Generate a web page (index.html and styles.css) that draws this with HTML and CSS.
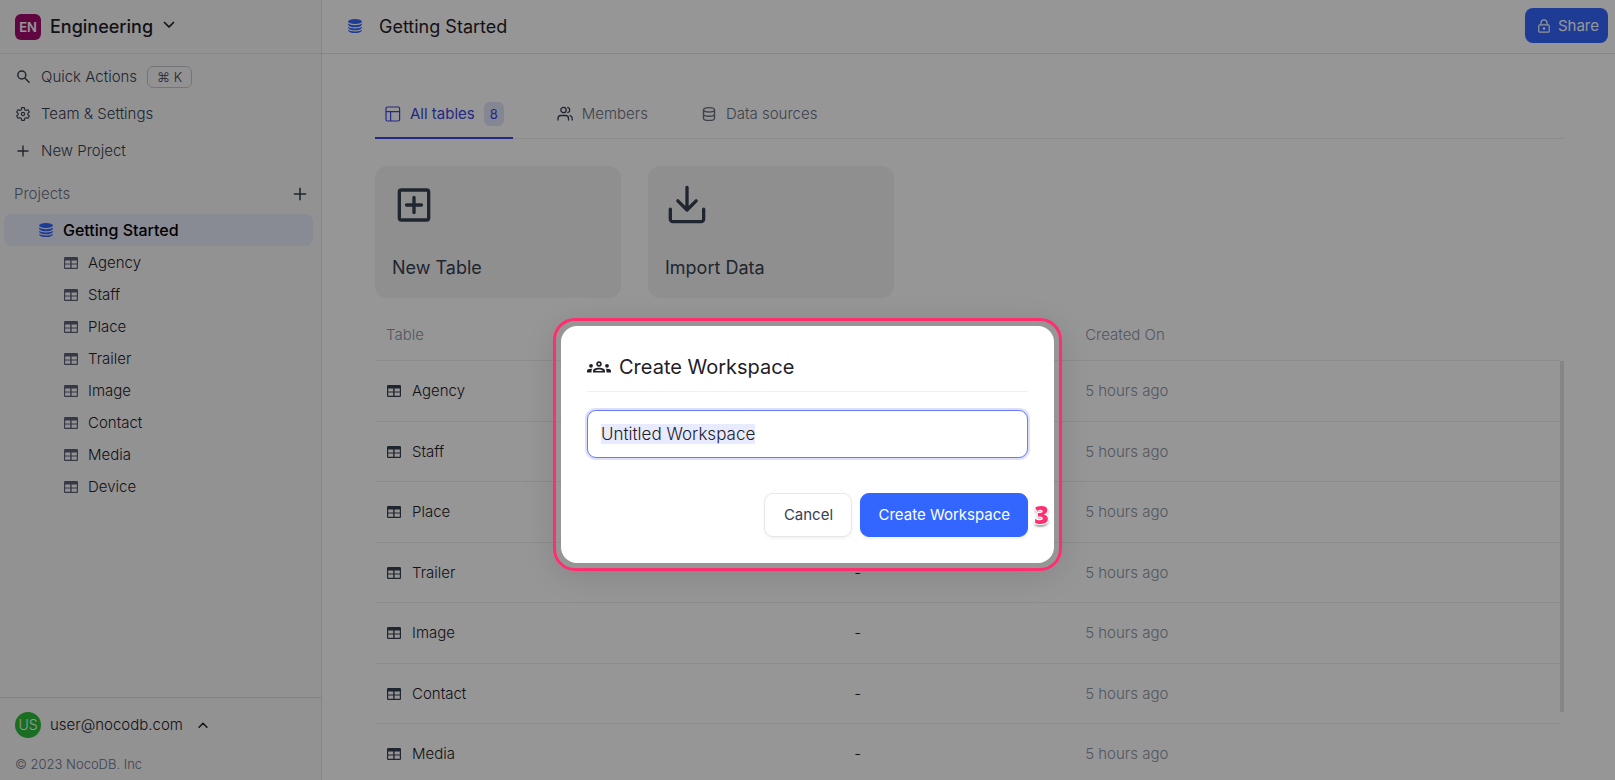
FILE: index.html
```html
<!DOCTYPE html>
<html lang="en">
<head>
<meta charset="utf-8">
<title>Getting Started</title>
<link rel="stylesheet" href="styles.css">
</head>
<body>
<svg class="sprite" aria-hidden="true">
  <symbol id="i-table" viewBox="0 0 14 12"><path fill="currentColor" fill-rule="evenodd" d="M1.200 0h11.600a1.200 1.200 0 0 1 1.200 1.200v9.600a1.200 1.200 0 0 1-1.200 1.200H1.200A1.200 1.200 0 0 1 0 10.800V1.200A1.200 1.200 0 0 1 1.200 0ZM1.200 3.400v3h5v-3Zm6.400 0v3h5.200v-3ZM1.200 7.600v3.200h5V7.600Zm6.400 0v3.200h5.200V7.600Z"/></symbol>
  <symbol id="i-db" viewBox="0 0 14 14"><g fill="currentColor"><ellipse cx="7" cy="2.500" rx="6.800" ry="2.500"/><path d="M.2 4.300C1.200 5.700 3.800 6.200 7 6.200s5.800-.5 6.800-1.900v1.600C13 7.300 10.500 8.300 7 8.300S1 7.300.2 5.900Z"/><path d="M.2 7.800C1.200 9 3.800 9.400 7 9.400s5.800-.4 6.800-1.600v1.200c-.8 1.400-3.300 2.300-6.800 2.300S1 10.400.2 9Z"/><path d="M.2 10.700c1 1.300 3.600 1.700 6.800 1.700s5.800-.4 6.800-1.700v1C13 13.100 10.500 14 7 14S1 13.100.2 11.700Z"/></g></symbol>
  <symbol id="i-plus" viewBox="0 0 16 16"><path d="M8 3v10M3 8h10" fill="none" stroke="currentColor" stroke-width="1.400" stroke-linecap="round"/></symbol>
  <symbol id="i-chev" viewBox="0 0 16 16"><path d="m3.500 5.500 4.500 4.500 4.500-4.500" fill="none" stroke="currentColor" stroke-width="1.700" stroke-linecap="round" stroke-linejoin="round"/></symbol>
</svg>

<div class="app">
  <aside class="sidebar">
    <header class="workspace">
      <span class="ws-badge">EN</span>
      <span class="ws-name">Engineering</span>
      <svg class="ic16 ws-chev"><use href="#i-chev"/></svg>
    </header>
    <nav class="actions">
      <a href="#" class="action">
        <svg class="ic16" viewBox="0 0 16 16" fill="none" stroke="currentColor" stroke-width="1.500"><circle cx="6.800" cy="6" r="4"/><path d="m9.800 9 4.700 4.700"/></svg>
        Quick Actions <kbd class="kbd">⌘ K</kbd>
      </a>
      <a href="#" class="action">
        <svg class="ic16" viewBox="0 0 24 24" fill="none" stroke="currentColor" stroke-width="1.700" stroke-linejoin="round"><circle cx="12" cy="12" r="2.400"/><path d="M10 2.500h4l.6 3 2 1.100 2.900-1 2 3.500-2.300 2v1.900l2.300 2-2 3.500-2.900-1-2 1.100-.6 3h-4l-.6-3-2-1.100-2.900 1-2-3.500 2.300-2v-1.900l-2.300-2 2-3.500 2.900 1 2-1.100z"/></svg>
        Team &amp; Settings
      </a>
      <a href="#" class="action"><svg class="ic16"><use href="#i-plus"/></svg>New Project</a>
    </nav>
    <div class="projects-head">
      <span>Projects</span>
      <button class="icon-btn" aria-label="Add project"><svg class="ic18"><use href="#i-plus"/></svg></button>
    </div>
    <a href="#" class="project"><svg class="db"><use href="#i-db"/></svg>Getting Started</a>
    <nav class="tree">
      <a href="#"><svg class="tbl"><use href="#i-table"/></svg>Agency</a>
      <a href="#"><svg class="tbl"><use href="#i-table"/></svg>Staff</a>
      <a href="#"><svg class="tbl"><use href="#i-table"/></svg>Place</a>
      <a href="#"><svg class="tbl"><use href="#i-table"/></svg>Trailer</a>
      <a href="#"><svg class="tbl"><use href="#i-table"/></svg>Image</a>
      <a href="#"><svg class="tbl"><use href="#i-table"/></svg>Contact</a>
      <a href="#"><svg class="tbl"><use href="#i-table"/></svg>Media</a>
      <a href="#"><svg class="tbl"><use href="#i-table"/></svg>Device</a>
    </nav>
    <footer class="account">
      <div class="user">
        <span class="avatar">US</span>
        <span>user@nocodb.com</span>
        <svg class="ic14 up"><use href="#i-chev"/></svg>
      </div>
      <div class="copy">© 2023 NocoDB. Inc</div>
    </footer>
  </aside>

  <main class="main">
    <header class="topbar">
      <svg class="db"><use href="#i-db"/></svg>
      <h1 class="title">Getting Started</h1>
      <button class="share">
        <svg class="ic14" viewBox="0 0 14 14" fill="none" stroke="currentColor" stroke-width="1.200" stroke-linejoin="round"><rect x="1.800" y="5.800" width="10.400" height="7.400" rx="1"/><path d="M4 5.800V3.800a3 3 0 0 1 6 0v2"/><circle cx="7" cy="9.500" r=".7"/></svg>
        Share
      </button>
    </header>
    <section class="content">
      <nav class="tabs">
        <a href="#" class="tab active">
          <svg class="ic16" viewBox="0 0 16 16" fill="none" stroke="currentColor" stroke-width="1.200"><rect x="1" y="1" width="13.600" height="14" rx="1.500"/><path d="M1 5.600h13.600M5.600 5.600V15"/></svg>
          All tables <span class="count">8</span>
        </a>
        <a href="#" class="tab">
          <svg class="ic16 dark" viewBox="0 0 16 16" fill="none" stroke="currentColor" stroke-width="1.300" stroke-linecap="round"><circle cx="6.500" cy="4" r="2.700"/><path d="M1 14v-1.500a3 3 0 0 1 3-3h4.500a3 3 0 0 1 3 3V14M10.800 1.400a2.700 2.700 0 0 1 0 5.200M13 9.700a3 3 0 0 1 2.200 2.900V14"/></svg>
          Members
        </a>
        <a href="#" class="tab">
          <svg class="ic16" viewBox="0 0 16 16" fill="none" stroke="currentColor" stroke-width="1.400"><ellipse cx="8" cy="3.800" rx="5.500" ry="2.200"/><path d="M2.500 3.800v8.400c0 1.200 2.500 2.200 5.500 2.200s5.500-1 5.500-2.200V3.800M2.500 8c0 1.200 2.500 2.200 5.500 2.200s5.500-1 5.500-2.200"/></svg>
          Data sources
        </a>
      </nav>
      <div class="cards">
        <button class="card">
          <svg class="ic40" viewBox="0 0 24 24" fill="none" stroke="currentColor" stroke-width="2" stroke-linecap="round" stroke-linejoin="round"><rect x="3.200" y="3" width="17.600" height="18" rx="1.200"/><path d="M12 7.500v9M7.500 12h9"/></svg>
          New Table
        </button>
        <button class="card">
          <svg class="ic40" viewBox="0 0 24 24" fill="none" stroke="currentColor" stroke-width="2" stroke-linecap="round" stroke-linejoin="round"><path d="M2 14.500v6A1.500 1.500 0 0 0 3.500 22h17a1.500 1.500 0 0 0 1.500-1.500v-6M6.500 9.500l5.500 5.500 5.500-5.500M12 1.500V15"/></svg>
          Import Data
        </button>
      </div>
      <div class="list">
        <table class="grid">
          <thead><tr><th class="c1">Table</th><th class="c2">Source</th><th>Created On</th></tr></thead>
          <tbody>
            <tr><td><span class="cell"><svg class="tbl"><use href="#i-table"/></svg>Agency</span></td><td class="src">-</td><td class="ago">5 hours ago</td></tr>
            <tr><td><span class="cell"><svg class="tbl"><use href="#i-table"/></svg>Staff</span></td><td class="src">-</td><td class="ago">5 hours ago</td></tr>
            <tr><td><span class="cell"><svg class="tbl"><use href="#i-table"/></svg>Place</span></td><td class="src">-</td><td class="ago">5 hours ago</td></tr>
            <tr><td><span class="cell"><svg class="tbl"><use href="#i-table"/></svg>Trailer</span></td><td class="src">-</td><td class="ago">5 hours ago</td></tr>
            <tr><td><span class="cell"><svg class="tbl"><use href="#i-table"/></svg>Image</span></td><td class="src">-</td><td class="ago">5 hours ago</td></tr>
            <tr><td><span class="cell"><svg class="tbl"><use href="#i-table"/></svg>Contact</span></td><td class="src">-</td><td class="ago">5 hours ago</td></tr>
            <tr><td><span class="cell"><svg class="tbl"><use href="#i-table"/></svg>Media</span></td><td class="src">-</td><td class="ago">5 hours ago</td></tr>
          </tbody>
        </table>
        <div class="track"><div class="thumb"></div></div>
      </div>
    </section>
  </main>
</div>

<div class="overlay">
  <div class="focus-ring">
    <form class="dialog" role="dialog" aria-labelledby="dlg-title">
      <div class="dialog-head">
        <svg class="groups" viewBox="0 0 24 12" fill="currentColor"><path fill-rule="evenodd" d="M12 .3a2.700 2.700 0 1 1 0 5.400 2.700 2.700 0 0 1 0-5.400Zm0 1.600a1.100 1.100 0 1 0 0 2.200 1.100 1.100 0 0 0 0-2.200Z"/><path fill-rule="evenodd" d="M6 11.500V9.900c0-2 2.900-3.200 6-3.200s6 1.200 6 3.200v1.600Zm2-1.600h8c-.5-.9-2.300-1.500-4-1.500s-3.500.6-4 1.500Z"/><circle cx="4" cy="4.800" r="1.900"/><circle cx="20" cy="4.800" r="1.900"/><path d="M0 11.500v-1.800c0-1.500 2-2.200 5.300-2-.6.700-.8 1.400-.8 2.200v1.600ZM24 11.500v-1.800c0-1.500-2-2.200-5.300-2 .6.700.8 1.400.8 2.200v1.600Z"/></svg>
        <h2 class="dialog-title" id="dlg-title">Create Workspace</h2>
      </div>
      <input class="field" type="text" aria-label="Workspace name" value="Untitled Workspace" autofocus>
      <div class="buttons">
        <button type="button" class="btn">Cancel</button>
        <button type="button" class="btn primary">Create Workspace</button>
      </div>
      <span class="step">3</span>
    </form>
  </div>
</div>
<script src="main.js"></script>
</body>
</html>
```
FILE: styles.css
```css
* { box-sizing: border-box; }
html, body { height: 100%; }
body {
  margin: 0;
  overflow: hidden;
  font-family: Inter, "Open Sans", sans-serif;
  font-size: 15px;
  font-weight: 300;
  line-height: 20px;
  color: #1f2028;
}
a { color: inherit; text-decoration: none; }
button, input { font: inherit; color: inherit; }
h1, h2 { margin: 0; font-weight: 400; }
svg { flex: none; }
.sprite { position: absolute; width: 0; height: 0; }
.ic14 { width: 14px; height: 14px; }
.ic16 { width: 16px; height: 16px; }
.ic18 { width: 18px; height: 18px; }
.ic40 { width: 40px; height: 40px; }
.tbl { width: 14px; height: 12px; color: #374151; }
.db { width: 14px; height: 14px; color: #3366ff; }

.app { display: flex; height: 100%; }

.sidebar {
  display: flex;
  flex-direction: column;
  flex: none;
  width: 322px;
  background: #f9f9fa;
  border-right: 1px solid #e4e4e8;
}
.workspace {
  display: flex;
  align-items: center;
  height: 54px;
  padding: 0 15px;
  border-bottom: 1px solid #e4e4e8;
}
.ws-badge {
  width: 26px;
  margin-right: 9px;
  border-radius: 6px;
  background: #a30d70;
  color: #fff;
  font-size: 13px;
  font-weight: 600;
  line-height: 26px;
  text-align: center;
}
.ws-name { font-size: 18px; font-weight: 500; }
.ws-chev { margin: 0 0 4px 8px; }
.actions { padding-top: 4px; }
.action {
  display: flex;
  align-items: center;
  gap: 10px;
  height: 37px;
  padding-left: 15px;
  color: #374151;
}
.kbd {
  padding: 0 9px;
  border: 1px solid #c8c8ce;
  border-radius: 6px;
  font: inherit;
  font-size: 13px;
}
.projects-head {
  display: flex;
  align-items: center;
  justify-content: space-between;
  height: 45px;
  padding: 5px 12px 0 14px;
  color: #6a7184;
}
.icon-btn { display: flex; padding: 0; border: 0; background: none; color: #374151; }
.project {
  display: flex;
  align-items: center;
  gap: 10px;
  height: 32px;
  margin: 0 8px 0 4px;
  padding-left: 35px;
  border-radius: 8px;
  background: #e8ecfb;
  color: #000;
  font-size: 16px;
  font-weight: 500;
}
.tree { flex: 1; padding-top: 1px; }
.tree a {
  display: flex;
  align-items: center;
  gap: 10px;
  height: 32px;
  padding-left: 64px;
}
.tree .tbl { color: #5c6278; }
.account {
  height: 83px;
  padding: 14px 15px;
  border-top: 1px solid #e0e0e4;
}
.user { display: flex; align-items: center; gap: 9px; }
.user .up { margin-left: 4px; transform: rotate(180deg); }
.avatar {
  width: 26px;
  border-radius: 50%;
  background: #2cbb3a;
  color: #fff;
  font-size: 14px;
  line-height: 26px;
  text-align: center;
}
.copy { margin-top: 16px; color: #6a7184; font-size: 13px; }

.main { flex: 1; min-width: 0; display: flex; flex-direction: column; background: #fff; }
.topbar {
  display: flex;
  align-items: center;
  flex: none;
  height: 54px;
  padding: 0 7px 2px 26px;
  border-bottom: 1px solid #e4e4e8;
}
.title { flex: 1; margin-left: 17px; padding-top: 2px; font-size: 18px; }
.share {
  display: flex;
  align-items: center;
  gap: 7px;
  height: 35px;
  padding: 0 9px 0 12px;
  border: 0;
  border-radius: 8px;
  background: #3366ff;
  color: #fff;
  font-weight: 400;
}
.content {
  display: flex;
  flex-direction: column;
  flex: 1;
  min-height: 0;
  padding: 34px 51px 0 53px;
}
.tabs { display: flex; flex: none; gap: 34px; height: 51px; border-bottom: 1px solid #eeeef0; }
.tab {
  display: flex;
  align-items: center;
  gap: 9px;
  height: 51px;
  padding: 2px 9px 0 10px;
  border-bottom: 2px solid transparent;
  color: #6a7184;
}
.tab .dark { color: #374151; }
.tab.active { border-color: #3c46e0; color: #3c46e0; font-weight: 400; }
.count {
  padding: 2px 6px;
  border-radius: 6px;
  background: #e0e4fa;
  font-size: 13px;
}
.cards { display: flex; flex: none; gap: 27px; padding-top: 27px; }
.card {
  display: flex;
  flex-direction: column;
  justify-content: space-between;
  width: 246px;
  height: 132px;
  padding: 19px 17px 20px;
  border: 0;
  border-radius: 12px;
  background: #f3f3f4;
  color: #374151;
  font-size: 18px;
  font-weight: 400;
  text-align: left;
}
.card svg { margin-left: 2px; }
.list { display: flex; flex: 1; min-height: 0; padding-top: 12px; overflow: hidden; }
.grid { flex: 1; align-self: flex-start; border-collapse: separate; border-spacing: 0; table-layout: fixed; }
.grid th, .grid td { padding: 0 11px; border-bottom: 1px solid #eeeef0; text-align: left; }
.grid th { height: 51px; color: #8d94a5; font-weight: 300; }
.grid td { height: 60px; }
.grid tr:nth-child(odd) td { height: 61px; }
.c1 { width: 39%; }
.c2 { width: 20%; }
.grid td:first-child { padding-left: 12px; }
.grid td.src { padding-left: 17px; }
.grid td.ago { color: #8d94a5; }
.cell { display: flex; align-items: center; gap: 11px; }
.track { width: 4px; padding-top: 51px; }
.thumb { height: 351px; background: #e2e2e3; }

.overlay {
  position: fixed;
  inset: 0;
  display: grid;
  place-items: center;
  padding-top: 110px;
  align-items: start;
  background: rgba(0, 0, 0, 0.41);
}
.focus-ring {
  margin-top: 208px;
  padding: 5px;
  border: 3px solid #ff2e6e;
  border-radius: 22px;
  box-shadow: 0 6px 36px rgba(0, 0, 0, 0.12);
}
.dialog {
  position: relative;
  width: 493px;
  padding: 26px;
  border-radius: 16px;
  background: #fff;
}
.dialog-head {
  display: flex;
  align-items: center;
  gap: 8px;
  padding: 3px 0 12px;
  border-bottom: 1px solid #f0f0f2;
}
.groups { width: 24px; height: 12px; }
.dialog-title { font-size: 20px; line-height: 24px; }
.field {
  display: block;
  width: 100%;
  height: 48px;
  margin-top: 18px;
  padding: 0 13px;
  border: 1px solid #6b7bf5;
  border-radius: 9px;
  outline: none;
  box-shadow: 0 0 0 2px #dcdffb;
  font-size: 17px;
  line-height: 28px;
}
.field::selection { background: #e8eafd; color: #1f2028; }
.buttons { display: flex; justify-content: flex-end; gap: 8px; margin-top: 35px; }
.btn {
  min-width: 88px;
  height: 44px;
  padding: 0 17px;
  border: 1px solid #e7e7e9;
  border-radius: 9px;
  background: #fff;
  box-shadow: 0 2px 3px rgba(0, 0, 0, 0.05);
  color: #374151;
  font-weight: 400;
}
.btn.primary { border-color: #3366ff; background: #3366ff; color: #fff; }
.step {
  position: absolute;
  right: 5px;
  bottom: 37px;
  color: #ff2e6e;
  font-family: "Open Sans", sans-serif;
  font-size: 25px;
  font-weight: 800;
  line-height: 24px;
  text-shadow: -1px -1px 1px #fff, 1px -1px 1px #fff, -1px 1px 1px #fff, 1px 1px 1px #fff, 0 2px 3px rgba(0, 0, 0, 0.7);
}
```
FILE: main.js
```js
const field = document.querySelector('.field');
field.focus();
field.select();
```
